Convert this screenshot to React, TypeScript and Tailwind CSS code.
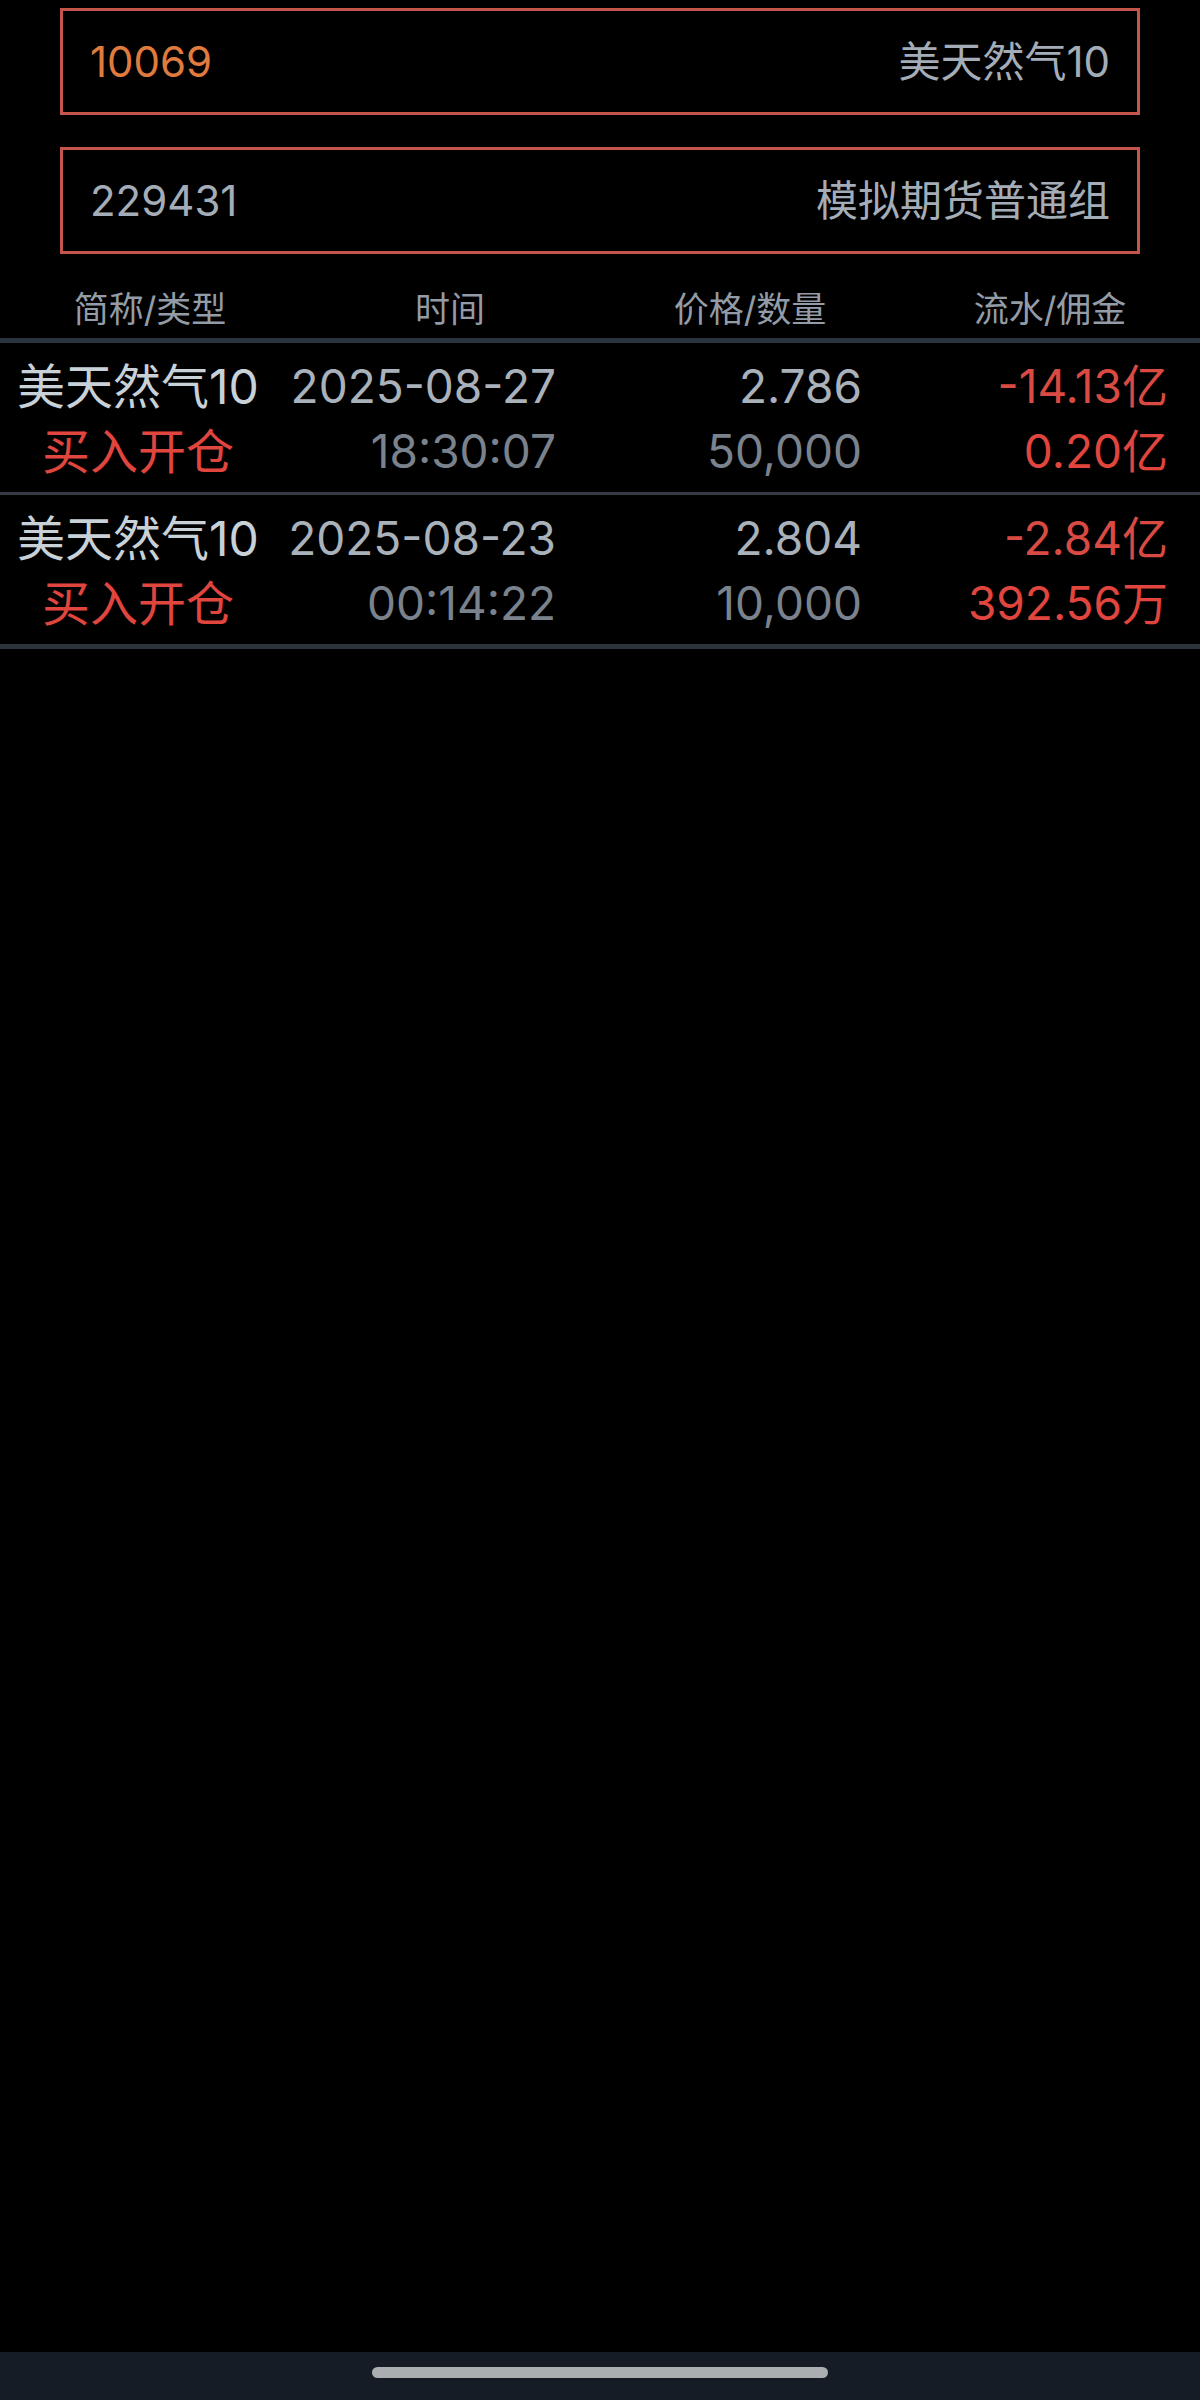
import React from "react";

type Trade = {
  name: string;
  side: string;
  date: string;
  time: string;
  price: string;
  qty: string;
  flow: string;
  fee: string;
};

const trades: Trade[] = [
  {
    name: "美天然气10",
    side: "买入开仓",
    date: "2025-08-27",
    time: "18:30:07",
    price: "2.786",
    qty: "50,000",
    flow: "-14.13亿",
    fee: "0.20亿",
  },
  {
    name: "美天然气10",
    side: "买入开仓",
    date: "2025-08-23",
    time: "00:14:22",
    price: "2.804",
    qty: "10,000",
    flow: "-2.84亿",
    fee: "392.56万",
  },
];

const font = {
  fontFamily: '"Inter", "Noto Sans CJK SC", sans-serif',
};

const App: React.FC = () => {
  return (
    <div className="min-h-[2400px] w-full bg-black flex flex-col" style={font}>
      <div className="px-[60px] pt-[8px]">
        <div className="h-[107px] border-[3px] border-[#c4554d] flex items-center justify-between px-[27px] text-[42px]">
          <span className="text-[#e07b3f]">10069</span>
          <span className="text-[#a4adb7]">美天然气10</span>
        </div>
        <div className="mt-[32px] h-[107px] border-[3px] border-[#c4554d] flex items-center justify-between px-[27px] text-[42px]">
          <span className="text-[#a4adb7]">229431</span>
          <span className="text-[#a4adb7]">模拟期货普通组</span>
        </div>
      </div>

      <div className="grid grid-cols-4 pt-[30px] pb-[4px] border-b-[5px] border-[#2a3441] text-[35px] leading-[50px] text-[#939ca6] text-center">
        <div>简称/类型</div>
        <div>时间</div>
        <div>价格/数量</div>
        <div>流水/佣金</div>
      </div>

      {trades.map((t, i) => (
        <div
          key={i}
          className={
            "flex pt-[11px] pb-[8px] text-[46px] leading-[65px] " +
            (i === trades.length - 1
              ? "border-b-[5px] border-[#2c333b]"
              : "border-b-[3px] border-[#353b43]")
          }
        >
          <div className="w-[276px] text-center text-[48px]">
            <div className="text-[#c8d0d8]">{t.name}</div>
            <div className="text-[#e0453e]">{t.side}</div>
          </div>
          <div className="w-[280px] text-right">
            <div className="text-[#a9b1ba]">{t.date}</div>
            <div className="text-[#7a838d]">{t.time}</div>
          </div>
          <div className="w-[306px] text-right">
            <div className="text-[#a9b1ba]">{t.price}</div>
            <div className="text-[#7a838d]">{t.qty}</div>
          </div>
          <div className="flex-1 text-right pr-[32px]">
            <div className="text-[#d94a43]">{t.flow}</div>
            <div className="text-[#e0453e]">{t.fee}</div>
          </div>
        </div>
      ))}

      <div className="flex-1" />

      <div className="h-[48px] bg-[#161c25] flex justify-center pt-[15px]">
        <div className="w-[456px] h-[11px] rounded-full bg-[#abaeb1]" />
      </div>
    </div>
  );
};

export default App;
